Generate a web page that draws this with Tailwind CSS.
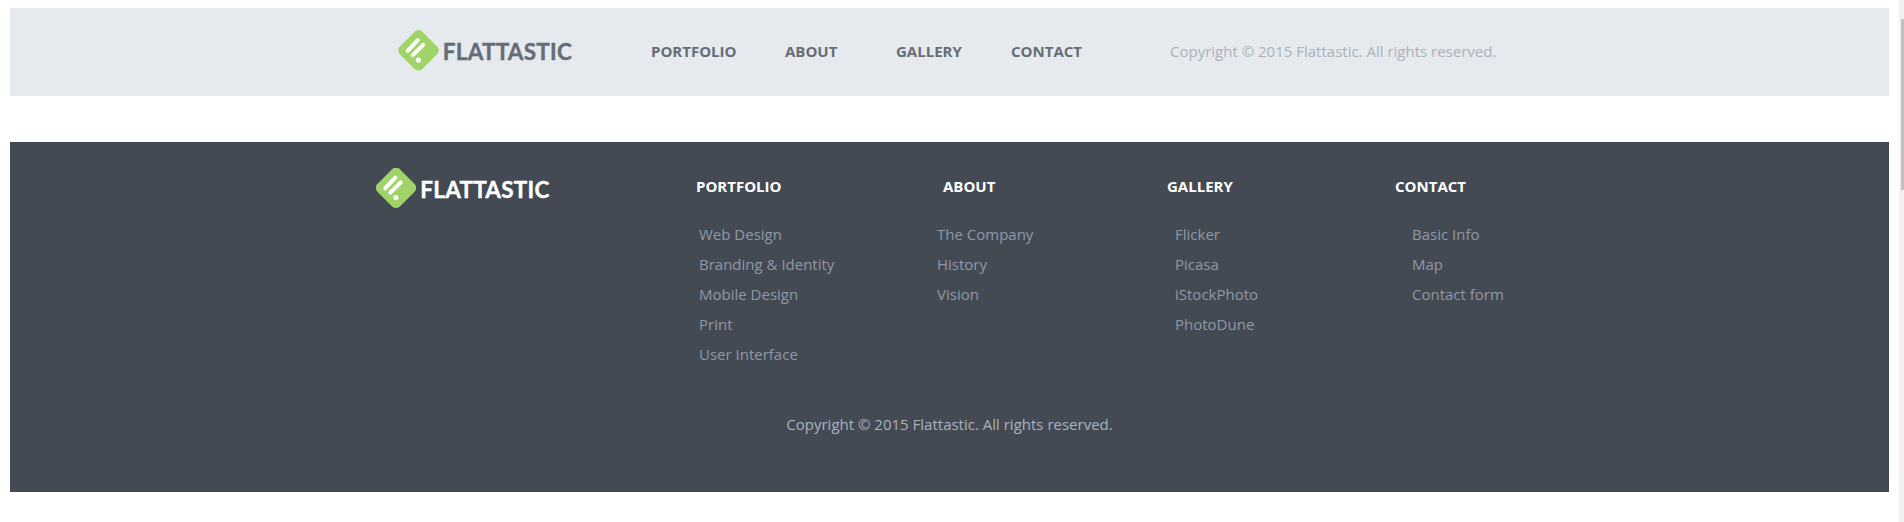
<!DOCTYPE html>
<html lang="en">
<head>
<meta charset="utf-8">
<title>Flattastic</title>
<script src="https://cdn.jsdelivr.net/npm/@tailwindcss/browser@4"></script>
</head>
<body class="relative h-[522px] overflow-hidden bg-white pt-2 pl-[10px] pr-[15px] font-['Open_Sans',sans-serif] text-[15px] leading-[30px]">
<svg class="hidden">
  <symbol id="mark" viewBox="0 0 41 41">
    <rect x="4.6" y="4.4" width="31.8" height="31.8" rx="5.5" transform="rotate(45 20.5 20.3)" fill="#a0d468"/>
    <path d="M9.7 20.8L19.8 10.2M14.8 25.2L25.2 14.8" stroke="#fff" stroke-width="4" stroke-linecap="round" fill="none"/>
    <circle cx="20.4" cy="30.1" r="2.6" fill="#fff"/>
  </symbol>
</svg>
<header class="flex h-[88px] bg-[#e6e9ed] pt-[22px] pl-[388px]">
  <svg class="w-[253px] h-[41px] shrink-0 text-[#656d78]" viewBox="0 0 253 41">
    <use href="#mark" width="41" height="41"/>
    <text x="44.8" y="29.7" font-family="Lato" font-weight="700" font-size="22.5" stroke="currentColor" stroke-width=".4" textLength="129" fill="currentColor">FLATTASTIC</text>
  </svg>
  <nav class="flex pt-[6px] font-bold text-[#656d78]">
    <a class="w-[134px]">PORTFOLIO</a>
    <a class="w-[111px]">ABOUT</a>
    <a class="w-[115px]">GALLERY</a>
    <a class="w-[159px]">CONTACT</a>
  </nav>
  <p class="pt-[6px] whitespace-nowrap text-[#aab2bd]">Copyright © 2015 Flattastic. All rights reserved.</p>
</header>
<footer class="mt-[46px] h-[350px] bg-[#434a54] pt-[26px]">
  <div class="flex h-[241px] pl-[366px]">
    <svg class="w-[319px] h-[41px] shrink-0 text-white" viewBox="0.5 0.5 319 41">
      <use href="#mark" width="41" height="41"/>
      <text x="44.8" y="30" font-family="Lato" font-weight="700" font-size="22.5" stroke="currentColor" stroke-width=".4" textLength="129" fill="currentColor">FLATTASTIC</text>
    </svg>
    <div class="pt-[3px]">
      <div class="flex pl-px font-bold text-white">
        <h3 class="w-[247px]">PORTFOLIO</h3>
        <h3 class="w-[224px]">ABOUT</h3>
        <h3 class="w-[228px]">GALLERY</h3>
        <h3>CONTACT</h3>
      </div>
      <div class="flex pt-[18px] pl-[4px] text-[#9098a5]">
        <ul class="w-[238px]"><li>Web Design</li><li>Branding &amp; Identity</li><li>Mobile Design</li><li>Print</li><li>User Interface</li></ul>
        <ul class="w-[238px]"><li>The Company</li><li>History</li><li>Vision</li></ul>
        <ul class="w-[237px]"><li>Flicker</li><li>Picasa</li><li>iStockPhoto</li><li>PhotoDune</li></ul>
        <ul><li>Basic Info</li><li>Map</li><li>Contact form</li></ul>
      </div>
    </div>
  </div>
  <p class="text-center text-[#aab2bd]">Copyright © 2015 Flattastic. All rights reserved.</p>
</footer>
<div class="absolute top-0 right-0 h-full w-[5px] bg-[#f0f0f0] pt-[19px] pl-[2px]"><div class="h-[171px] bg-[#c0c0c0]"></div></div>
</body>
</html>
